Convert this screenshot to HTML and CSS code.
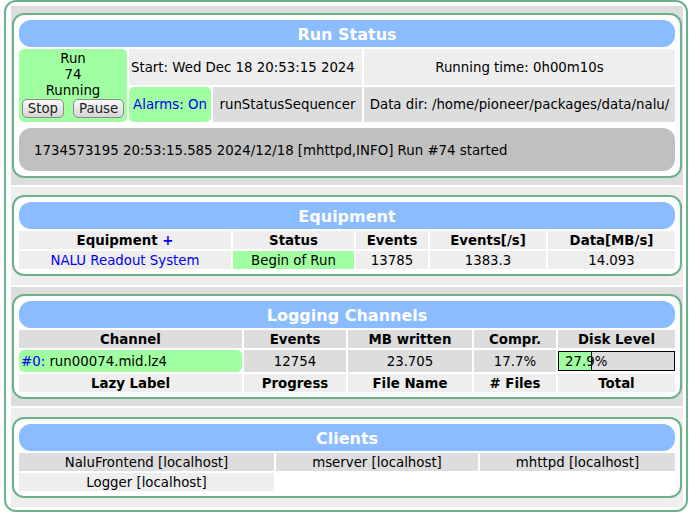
FILE: index.html
```html
<!DOCTYPE html>
<html>
<head>
<meta charset="utf-8">
<title>MIDAS Status</title>
<link rel="stylesheet" href="styles.css">
</head>
<body>
<div class="page">
  <div class="band band-dark band-run">
    <div class="box">
      <div class="hdr">Run Status</div>
      <div class="run-grid">
        <div class="run-state green">
          <div class="line">Run</div>
          <div class="line">74</div>
          <div class="line">Running</div>
          <div class="buttons">
            <button class="btn">Stop</button>
            <button class="btn">Pause</button>
          </div>
        </div>
        <div class="cell light left start">Start: Wed Dec 18 20:53:15 2024</div>
        <div class="cell light">Running time: 0h00m10s</div>
        <div class="cell green rounded link">Alarms: On</div>
        <div class="cell dark">runStatusSequencer</div>
        <div class="cell dark">Data dir: /home/pioneer/packages/data/nalu/</div>
      </div>
      <div class="message">1734573195 20:53:15.585 2024/12/18 [mhttpd,INFO] Run #74 started</div>
    </div>
  </div>

  <div class="band band-light band-eq">
    <div class="box">
      <div class="hdr">Equipment</div>
      <div class="eq-grid">
        <div class="cell light bold"><span>Equipment&nbsp;<span class="link">+</span></span></div>
        <div class="cell light bold">Status</div>
        <div class="cell light bold">Events</div>
        <div class="cell light bold">Events[/s]</div>
        <div class="cell light bold">Data[MB/s]</div>
        <div class="cell light link">NALU Readout System</div>
        <div class="cell green">Begin of Run</div>
        <div class="cell light">13785</div>
        <div class="cell light">1383.3</div>
        <div class="cell light">14.093</div>
      </div>
    </div>
  </div>

  <div class="band band-dark band-log">
    <div class="box">
      <div class="hdr">Logging Channels</div>
      <div class="log-grid">
        <div class="cell dark bold">Channel</div>
        <div class="cell dark bold">Events</div>
        <div class="cell dark bold">MB written</div>
        <div class="cell dark bold">Compr.</div>
        <div class="cell dark bold">Disk Level</div>
        <div class="cell green rounded left chan"><span><span class="link">#0:</span>&nbsp;run00074.mid.lz4</span></div>
        <div class="cell dark">12754</div>
        <div class="cell dark">23.705</div>
        <div class="cell dark">17.7%</div>
        <div class="disk">
          <div class="disk-bar">
            <div class="disk-fill" style="width: 27.9%"></div>
            <span class="disk-text">27.9%</span>
          </div>
        </div>
        <div class="cell light bold">Lazy Label</div>
        <div class="cell light bold">Progress</div>
        <div class="cell light bold">File Name</div>
        <div class="cell light bold"># Files</div>
        <div class="cell light bold">Total</div>
      </div>
    </div>
  </div>

  <div class="band band-light band-cl">
    <div class="box">
      <div class="hdr">Clients</div>
      <div class="cl-grid">
        <div class="cell dark">NaluFrontend [localhost]</div>
        <div class="cell dark">mserver [localhost]</div>
        <div class="cell dark">mhttpd [localhost]</div>
        <div class="cell light">Logger [localhost]</div>
        <div class="cell empty"></div>
        <div class="cell empty"></div>
      </div>
    </div>
  </div>
</div>
</body>
</html>
```

FILE: styles.css
```css
html, body {
  margin: 0;
  padding: 0;
  background: #ffffff;
}

body {
  font-family: "DejaVu Sans", Verdana, sans-serif;
  font-size: 13.33px;
  color: #000000;
}

.page {
  box-sizing: border-box;
  width: 684px;
  height: 512px;
  margin-left: 4px;
  border: 2px solid #6bb28c;
  border-radius: 12px;
  padding: 4px 3px 3px 5px;
  background: #ffffff;
  display: flex;
  flex-direction: column;
  gap: 2px;
}

.band {
  padding: 0 1px;
}

.band-dark { background: #dddddd; }
.band-light { background: #eeeeee; }

.band-run { padding-top: 7px; padding-bottom: 7px; }
.band-eq { padding-top: 8px; padding-bottom: 9px; }
.band-log { padding-top: 7px; padding-bottom: 7px; }
.band-cl { padding-top: 9px; padding-bottom: 9px; }

.box {
  border: 2px solid #6bb28c;
  border-radius: 12px;
  background: #ffffff;
  padding: 5px;
}

.hdr {
  height: 27px;
  line-height: 29px;
  background: #8bbcff;
  border-radius: 12px;
  color: #ffffff;
  font-weight: bold;
  font-size: 16px;
  text-align: center;
  overflow: hidden;
}

.cell {
  display: flex;
  align-items: center;
  justify-content: center;
  white-space: nowrap;
  overflow: hidden;
  text-align: center;
}

.left { justify-content: flex-start; }

.light { background: #eeeeee; }
.dark { background: #dddddd; }
.green { background: #a0ffa0; }
.rounded { border-radius: 5px; }
.empty { background: transparent; }
.bold { font-weight: bold; }
.link { color: #0000ee; }

.run-grid {
  display: grid;
  grid-template-columns: 108px 82px 149px 1fr;
  grid-template-rows: 36px 35px;
  gap: 2px;
  margin-top: 2px;
}

.run-state {
  grid-row: 1 / 3;
  grid-column: 1;
  border-radius: 5px;
  display: flex;
  flex-direction: column;
  align-items: center;
  padding-top: 2px;
}

.run-state .line {
  line-height: 16px;
}

.buttons {
  display: flex;
  gap: 9px;
  margin-top: 0;
}

.btn {
  font-family: "DejaVu Sans", Verdana, sans-serif;
  font-size: 13.33px;
  height: 19px;
  padding: 0 5px;
  margin: 0;
  border: 1px solid #8a8a8a;
  border-radius: 5px;
  background: linear-gradient(#f8f8f8, #d6d6d6);
  color: #222222;
  line-height: 17px;
}

.start {
  grid-column: 2 / 4;
  padding-left: 2px;
}

.message {
  margin-top: 6px;
  height: 43px;
  background: #c0c0c0;
  border-radius: 12px;
  display: flex;
  align-items: center;
  padding-left: 15px;
  padding-top: 1px;
  box-sizing: border-box;
  white-space: nowrap;
}

.eq-grid {
  display: grid;
  grid-template-columns: 212px 121px 72px 116px 1fr;
  grid-template-rows: 18px 18px;
  gap: 2px;
  margin-top: 2px;
}

.log-grid {
  display: grid;
  grid-template-columns: 223px 102px 124px 82px 1fr;
  grid-template-rows: 18px 22px 18px;
  gap: 2px;
  margin-top: 2px;
}

.chan {
  padding-left: 2px;
}

.disk {
  display: flex;
  align-items: center;
}

.disk-bar {
  position: relative;
  box-sizing: border-box;
  width: 100%;
  height: 20px;
  border: 1px solid #000000;
  background: #dddddd;
  display: flex;
  align-items: center;
}

.disk-fill {
  position: absolute;
  left: 0;
  top: 0;
  bottom: 0;
  background: #a0ffa0;
  border-right: 1px solid #000000;
}

.disk-text {
  position: relative;
  padding-left: 6px;
}

.cl-grid {
  display: grid;
  grid-template-columns: 255px 202px 1fr;
  grid-template-rows: 18px 18px;
  gap: 2px;
  margin-top: 2px;
}
```
